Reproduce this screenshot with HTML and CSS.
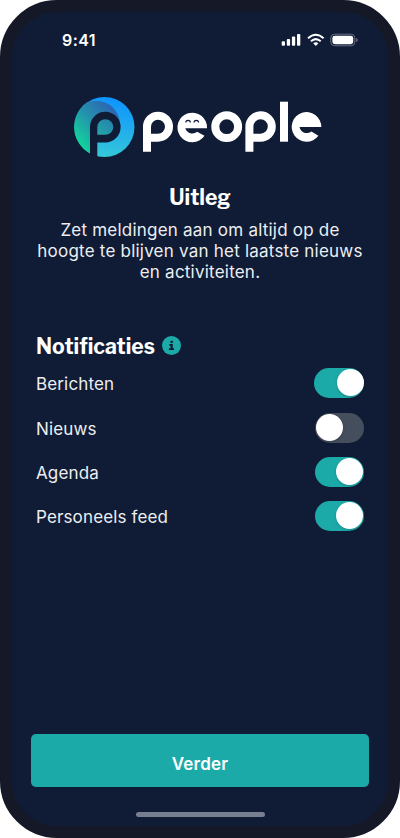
FILE: index.html
```
<!DOCTYPE html>
<html lang="nl">
<head>
<meta charset="utf-8">
<title>People</title>
<link rel="stylesheet" href="styles.css">
</head>
<body>
<main class="phone">
  <header class="status">
    <span class="time">9:41</span>
    <svg class="status-icons" width="78" height="14" viewBox="0 0 78 14" fill="#fff">
      <rect x="0.7" y="8.3" width="3.3" height="4.4" rx="1"/>
      <rect x="5.8" y="6" width="3.3" height="6.7" rx="1"/>
      <rect x="10.9" y="3.5" width="3.3" height="9.2" rx="1"/>
      <rect x="16" y="1" width="3.3" height="11.7" rx="1"/>
      <g fill="none" stroke="#fff" stroke-width="2">
        <path d="M27 5.3Q34.8 -1.7 42.6 5.3"/>
        <path d="M29.9 8.3Q34.8 3.9 39.7 8.3"/>
      </g>
      <path d="M32.2 10.2Q34.8 8.2 37.4 10.2L34.8 12.9Z"/>
      <rect x="49.8" y="1.2" width="24" height="11.6" rx="3.7" fill="none" stroke="#667084"/>
      <rect x="51.4" y="2.8" width="20.8" height="8.4" rx="2.4"/>
      <path d="M75 5V9Q76.7 8.4 76.7 7T75 5Z" fill="#667084"/>
    </svg>
  </header>
  <svg class="logo" width="250" height="64" viewBox="73 95 250 64" role="img" aria-label="people">
    <defs>
      <linearGradient id="ring" x1="0.7" y1="0" x2="0.5" y2="1"><stop offset="0" stop-color="#0d93ff"/><stop offset="1" stop-color="#35c8d8"/></linearGradient>
      <linearGradient id="fold" x1="0.75" y1="0.1" x2="0.05" y2="0.8"><stop offset="0" stop-color="#2c68b2"/><stop offset="0.45" stop-color="#2590ae"/><stop offset="1" stop-color="#10d89a"/></linearGradient>
      <linearGradient id="eye" x1="1" y1="0" x2="0" y2="1"><stop offset="0" stop-color="#257fae"/><stop offset="1" stop-color="#25a6a6"/></linearGradient>
    </defs>
    <circle cx="104.5" cy="127" r="30" fill="url(#ring)"/>
    <path d="M90 153.4A30 30 0 0 1 87 102.3C105 97 120 107 120.5 127H90Z" fill="url(#fold)"/>
    <path d="M90 158V127A15.3 15.3 0 1 1 105.3 142.4H97.3V158Z" fill="#101c36"/>
    <path d="M97.3 134.8V127A8 7.8 0 1 1 105.3 134.8Z" fill="url(#eye)"/>
    <g fill="none" stroke="#fff" stroke-width="8">
      <path d="M147 151.7V126.7A11 11 0 1 1 158 137.7H147"/>
      <circle cx="226.7" cy="126.7" r="11.4"/>
      <path d="M249.4 151.7V126.7A11.2 11.2 0 1 1 260.6 137.7H249.4"/>
      <path d="M284 101.7V141.7"/>
    </g>
    <g fill="#fff">
      <path d="M207 128.2H185.3A7.4 7.4 0 0 0 197.1 131.8L204.5 135.7A14.8 14.8 0 1 1 207 128.2Z"/>
      <path d="M321.3 127H299.5A7.4 7.4 0 0 0 311.4 131.5L318.4 135.7A14.8 14.8 0 1 1 321.3 127Z"/>
    </g>
    <path d="M185.8 122.6A2.3 2.3 0 0 1 190.4 122.6M194 122.6A2.3 2.3 0 0 1 198.6 122.6" fill="none" stroke="#101c36" stroke-width="1.2"/>
  </svg>
  <section class="intro">
    <h1>Uitleg</h1>
    <p>Zet meldingen aan om altijd op de<br>hoogte te blijven van het laatste nieuws<br>en activiteiten.</p>
  </section>
  <section class="notifications">
    <h2>Notificaties
      <svg class="info" width="19" height="19" viewBox="0 0 19 19"><circle cx="9.5" cy="9.5" r="9.5" fill="#1caaa9"/><path d="M8.5 4.8H10.8V7H8.5ZM7.4 8H10.8V12.2H12V14H7V12.2H8.5V9.8H7.4Z" fill="#101c36"/></svg>
    </h2>
    <div class="row"><span>Berichten</span><i class="switch wide on"></i></div>
    <div class="row"><span>Nieuws</span><i class="switch"></i></div>
    <div class="row"><span>Agenda</span><i class="switch on"></i></div>
    <div class="row"><span>Personeels feed</span><i class="switch on"></i></div>
  </section>
  <button class="next">Verder</button>
  <div class="home"></div>
</main>
</body>
</html>
```
FILE: styles.css
```
* { box-sizing: border-box; }
body { margin: 0; background: #fff; font-family: Inter, sans-serif; }
.phone {
  width: 400px; height: 838px; border: 12px solid #151927; border-radius: 57px;
  background: #101c36; color: #fff; display: flex; flex-direction: column;
}
.status { height: 28px; margin-top: 14px; padding: 0 29px 0 50px; display: flex; align-items: center; justify-content: space-between; }
.time { font-size: 16px; font-weight: 600; line-height: 20px; letter-spacing: 0.4px; }
.status-icons { display: block; }
.logo { display: block; flex: none; margin: 41px 0 0 61px; }
.intro { text-align: center; margin-top: 25px; }
h1, h2 { margin: 0; font-family: "Libre Franklin", "Open Sans", sans-serif; font-weight: 700; line-height: 28px; font-size: 21.2px; }
h2 { display: flex; align-items: center; gap: 7px; }
.info { margin-top: -4px; }
p { margin: 8px 0 0; font-size: 17px; line-height: 21px; letter-spacing: 0.22px; color: #eceef1; }
.notifications { margin: 50px 24px 0; }
.row { height: 44.4px; display: flex; align-items: center; justify-content: space-between; font-size: 17px; letter-spacing: 0.14px; color: #eceef1; }
.row span { padding-top: 2px; }
.switch { width: 49px; height: 30px; padding: 1px; border-radius: 15px; background: #454e5d; display: flex; }
.switch::before { content: ""; width: 27px; height: 27px; border-radius: 50%; background: #fff; box-shadow: 0 1px 3px #0003; }
.on { background: #1caaa9; justify-content: flex-end; }
.wide { width: 50px; }
.wide.on { padding-right: 0; }
.next { flex: none; width: 338px; height: 53px; margin: auto 0 25px 19px; border: 0; border-radius: 5px; background: #1caaa9; color: #fff; font: 600 17px Inter, sans-serif; letter-spacing: 0.2px; padding: 6px 0 0; }
.home { flex: none; width: 129px; height: 5px; margin: 0 auto 9px; border-radius: 3px; background: #777e90; }
```
